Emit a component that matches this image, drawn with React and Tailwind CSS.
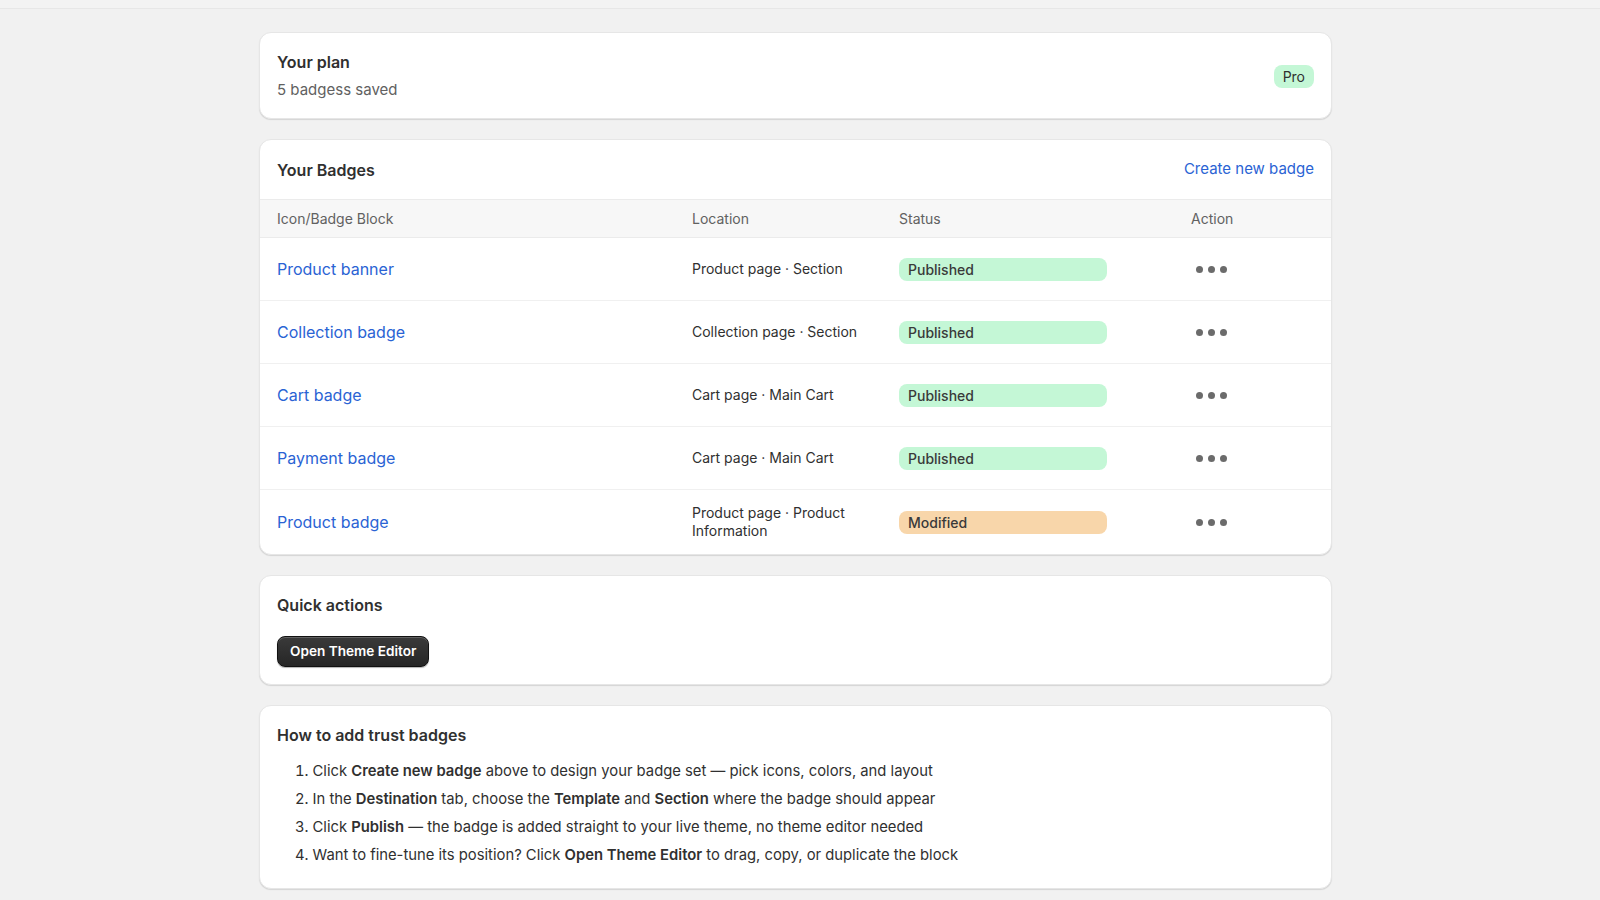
import React from "react";

const badges = [
  { name: "Product banner", location: "Product page · Section", status: "Published" },
  { name: "Collection badge", location: "Collection page · Section", status: "Published" },
  { name: "Cart badge", location: "Cart page · Main Cart", status: "Published" },
  { name: "Payment badge", location: "Cart page · Main Cart", status: "Published" },
  { name: "Product badge", location: "Product page · Product Information", status: "Modified" },
];

const Card = ({ className = "", children }) => (
  <div
    className={`bg-white rounded-[12px] border border-[#e6e6e6] shadow-[0_1px_1px_rgba(0,0,0,0.12)] ${className}`}
  >
    {children}
  </div>
);

const Dots = () => (
  <button type="button" className="w-[41px] h-[20px] flex items-center justify-center gap-[5px]">
    <span className="w-[7px] h-[7px] rounded-full bg-[#6b6b6b]"></span>
    <span className="w-[7px] h-[7px] rounded-full bg-[#6b6b6b]"></span>
    <span className="w-[7px] h-[7px] rounded-full bg-[#6b6b6b]"></span>
  </button>
);

const StatusPill = ({ status }) => (
  <div
    className={`w-[208px] h-[23px] rounded-[8px] px-[9px] flex items-center text-[14px] font-medium text-[#3a3a3a] ${
      status === "Published" ? "bg-[#c4f7d6]" : "bg-[#f8d6aa]"
    }`}
  >
    {status}
  </div>
);

export default function App() {
  return (
    <div
      className="min-h-screen bg-[#f1f1f1] text-[#303030]"
      style={{ fontFamily: "Inter, 'Noto Sans', Arial, sans-serif" }}
    >
      {/* thin top strip */}
      <div className="h-[9px] bg-[#f3f3f3] border-b border-[#e7e7e7]"></div>

      <div className="pl-[259px] pr-[268px] pt-[23px] pb-[12px] flex flex-col gap-[20px]">
        {/* Plan */}
        <Card className="px-[17px] pt-[19px] pb-[18px] flex items-center justify-between">
          <div>
            <h2 className="text-[16px] leading-[20px] font-semibold">Your plan</h2>
            <p className="mt-[8px] text-[15px] leading-[20px] text-[#616161]">5 badgess saved</p>
          </div>
          <span className="h-[23px] px-[9px] rounded-[8px] bg-[#c4f7d6] text-[14px] flex items-center text-[#303030]">
            Pro
          </span>
        </Card>

        {/* Badges table */}
        <Card className="overflow-hidden">
          <div className="h-[59px] px-[17px] flex items-center justify-between">
            <h2 className="text-[16px] font-semibold">Your Badges</h2>
            <a href="#" className="text-[15px] text-[#2a63d4]">
              Create new badge
            </a>
          </div>
          <div className="h-[39px] px-[17px] grid grid-cols-[415px_207px_292px_1fr] items-center bg-[#f7f7f7] border-y border-[#ebebeb] text-[14px] text-[#616161]">
            <div>Icon/Badge Block</div>
            <div>Location</div>
            <div>Status</div>
            <div>Action</div>
          </div>
          {badges.map((b, i) => (
            <div
              key={b.name}
              className={`min-h-[63px] py-[14px] px-[17px] grid grid-cols-[415px_207px_292px_1fr] items-center ${
                i < badges.length - 1 ? "border-b border-[#f0f0f0]" : ""
              }`}
            >
              <a href="#" className="text-[16px] text-[#2a63d4]">
                {b.name}
              </a>
              <div className="text-[14px] leading-[18px] text-[#303030] pr-[40px]">{b.location}</div>
              <div>
                <StatusPill status={b.status} />
              </div>
              <div>
                <Dots />
              </div>
            </div>
          ))}
        </Card>

        {/* Quick actions */}
        <Card className="px-[17px] pt-[19px] pb-[17px]">
          <h2 className="text-[16px] leading-[20px] font-semibold">Quick actions</h2>
          <button
            type="button"
            className="mt-[21px] h-[31px] px-[12px] rounded-[8px] bg-gradient-to-b from-[#3a3a3a] to-[#262626] border border-[#111] shadow-[inset_0_1px_0_rgba(255,255,255,0.2),0_1px_1px_rgba(0,0,0,0.3)] text-white text-[13.6px] font-semibold"
          >
            Open Theme Editor
          </button>
        </Card>

        {/* How to */}
        <Card className="px-[17px] pt-[19px] pb-[19px]">
          <h2 className="text-[16px] leading-[20px] font-semibold">How to add trust badges</h2>
          <ol className="mt-[12px] pl-[18px] list-decimal list-inside text-[14.8px] leading-[28px] text-[#303030]">
            <li>
              Click <b className="font-semibold">Create new badge</b> above to design your badge set — pick icons, colors, and layout
            </li>
            <li>
              In the <b className="font-semibold">Destination</b> tab, choose the <b className="font-semibold">Template</b> and{" "}
              <b className="font-semibold">Section</b> where the badge should appear
            </li>
            <li>
              Click <b className="font-semibold">Publish</b> — the badge is added straight to your live theme, no theme editor needed
            </li>
            <li>
              Want to fine-tune its position? Click <b className="font-semibold">Open Theme Editor</b> to drag, copy, or duplicate the block
            </li>
          </ol>
        </Card>
      </div>
    </div>
  );
}
